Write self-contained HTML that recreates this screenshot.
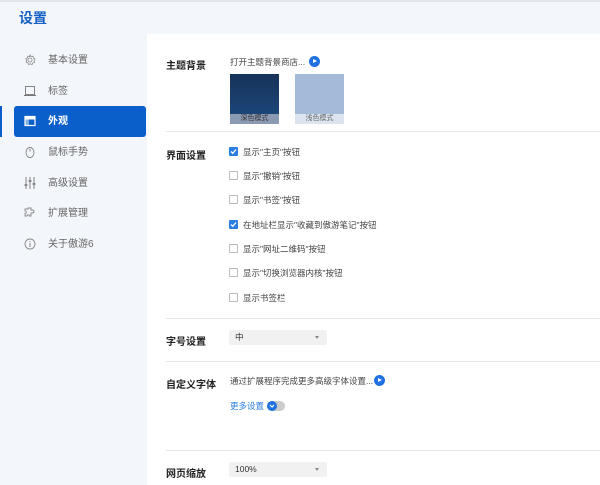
<!DOCTYPE html>
<html><head><meta charset="utf-8"><style>
*{margin:0;padding:0;box-sizing:border-box}
body{width:600px;height:485px;overflow:hidden;background:#f3f6fa;font-family:"Liberation Sans","Noto Sans CJK SC",sans-serif;position:relative;color:#333}
.topline{position:absolute;left:0;top:0;width:600px;height:2px;background:#e2e6ea}
.title{position:absolute;left:19px;top:8px;font-size:14px;font-weight:bold;color:#1560c4}
.nav{position:absolute;left:24px;font-size:10px;color:#666;height:31px;line-height:31px}
.nav svg{position:absolute;left:0;top:9px}
.nav span{position:absolute;left:24px;white-space:nowrap}
.sel{position:absolute;left:14px;top:106px;width:132px;height:31px;background:#0b5fcb;border-radius:3px}
.selbar{position:absolute;left:0;top:106px;width:2px;height:31px;background:#0b5fcb}
.main{position:absolute;left:147px;top:34px;width:453px;height:451px;background:#fff}
.lbl{position:absolute;left:166px;font-size:10px;font-weight:bold;color:#222}
.txt{position:absolute;font-size:8.5px;color:#444;white-space:nowrap}
.hr{position:absolute;left:166px;width:434px;height:1px;background:#e8e8e8}
.cb{position:absolute;left:229px;width:9px;height:9px;border:1px solid #bbb;border-radius:1px;background:#fff}
.cb.on{background:#2a7de1;border-color:#2a7de1}
.cbt{position:absolute;left:243px;font-size:8.5px;color:#444;white-space:nowrap}
.select{position:absolute;left:229px;width:98px;height:15px;background:#f1f1f1;border-radius:2px;font-size:8.5px;color:#333;padding-left:6px;line-height:15px}
.select:after{content:"";position:absolute;right:8px;top:6px;border:2px solid transparent;border-top:3px solid #888}
.play{position:absolute;width:11px;height:11px;border-radius:50%;background:#1f72e0}
.play:after{content:"";position:absolute;left:4px;top:3px;border-left:4px solid #fff;border-top:2.5px solid transparent;border-bottom:2.5px solid transparent}
</style></head><body>
<div class="topline"></div>
<div class="title">设置</div>
<div class="selbar"></div>
<div class="sel"></div>
<div class="nav" style="top:45px"><svg width="12" height="12" viewBox="0 0 12 12"><circle cx="6" cy="6" r="2" fill="none" stroke="#888" stroke-width=".8"/><path d="M6 1l1 1.5 2-.3.5 1.8 1.5 1-1 1.6.6 1.8-1.8.5-.7 1.7-1.7-.8-1.7.8-.7-1.7-1.8-.5.6-1.8-1-1.6 1.5-1 .5-1.8 2 .3z" fill="none" stroke="#888" stroke-width=".8"/></svg><span>基本设置</span></div>
<div class="nav" style="top:76px"><svg width="12" height="12"><rect x="1.5" y="1.5" width="9" height="8" fill="none" stroke="#777" stroke-width=".9"/><path d="M0 10.5h12" stroke="#777"/></svg><span>标签</span></div>
<div class="nav" style="top:106px;color:#fff;font-weight:bold"><svg width="12" height="12"><rect x="1" y="1.5" width="10" height="9" fill="none" stroke="#fff" stroke-width="1.2"/><rect x="1" y="1.5" width="10" height="3" fill="#fff"/><rect x="1" y="1.5" width="4" height="9" fill="#fff" opacity=".5"/></svg><span>外观</span></div>
<div class="nav" style="top:137px"><svg width="12" height="12"><ellipse cx="6" cy="6.5" rx="4" ry="5" fill="none" stroke="#888" stroke-width=".9"/><path d="M6 3v2.5" stroke="#888"/></svg><span>鼠标手势</span></div>
<div class="nav" style="top:168px"><svg width="12" height="12"><path d="M2 0v12M6 0v12M10 0v12" stroke="#777" stroke-width=".9"/><path d="M0.5 8h3M4.5 4h3M8.5 7h3" stroke="#777" stroke-width="1.4"/></svg><span>高级设置</span></div>
<div class="nav" style="top:198px"><svg width="12" height="12"><path d="M4 1h3v2h1.5a1.5 1.5 0 010 3H7v3H5.5a1.2 1.2 0 00-2.4 0H1V6.5a1.3 1.3 0 000-2.6V2h3z" fill="none" stroke="#888" stroke-width=".9"/></svg><span>扩展管理</span></div>
<div class="nav" style="top:229px"><svg width="12" height="12"><circle cx="6" cy="6" r="5" fill="none" stroke="#888" stroke-width=".9"/><path d="M6 5v4M6 3v1" stroke="#888"/></svg><span>关于傲游6</span></div>

<div class="main"></div>
<div class="lbl" style="top:57px">主题背景</div>
<div class="txt" style="left:230px;top:56px">打开主题背景商店...</div>
<div class="play" style="left:309px;top:56px"></div>
<div style="position:absolute;left:230px;top:74px;width:49px;height:50px;background:linear-gradient(#163259,#1d4a80)"></div>
<div style="position:absolute;left:230px;top:114px;width:49px;height:10px;background:#8a9ab3;font-size:7px;color:#333;text-align:center;line-height:10px">深色模式</div>
<div style="position:absolute;left:295px;top:74px;width:49px;height:50px;background:#a3bbd8"></div>
<div style="position:absolute;left:295px;top:114px;width:49px;height:10px;background:#dbe4ef;font-size:7px;color:#666;text-align:center;line-height:10px">浅色模式</div>
<div class="hr" style="top:131px"></div>

<div class="lbl" style="top:147px">界面设置</div>
<div class="cb on" style="top:147px"><svg width="7" height="7" style="position:absolute;left:0;top:0"><path d="M1 3.5l1.8 1.8L6 1.5" stroke="#fff" fill="none" stroke-width="1.3"/></svg></div><div class="cbt" style="top:146px">显示"主页"按钮</div>
<div class="cb" style="top:171px"></div><div class="cbt" style="top:170px">显示"撤销"按钮</div>
<div class="cb" style="top:195px"></div><div class="cbt" style="top:194px">显示"书签"按钮</div>
<div class="cb on" style="top:220px"><svg width="7" height="7" style="position:absolute;left:0;top:0"><path d="M1 3.5l1.8 1.8L6 1.5" stroke="#fff" fill="none" stroke-width="1.3"/></svg></div><div class="cbt" style="top:219px">在地址栏显示"收藏到傲游笔记"按钮</div>
<div class="cb" style="top:244px"></div><div class="cbt" style="top:243px">显示"网址二维码"按钮</div>
<div class="cb" style="top:268px"></div><div class="cbt" style="top:267px">显示"切换浏览器内核"按钮</div>
<div class="cb" style="top:293px"></div><div class="cbt" style="top:292px">显示书签栏</div>
<div class="hr" style="top:318px"></div>

<div class="lbl" style="top:333px">字号设置</div>
<div class="select" style="top:330px">中</div>
<div class="hr" style="top:361px"></div>

<div class="lbl" style="top:376px">自定义字体</div>
<div class="txt" style="left:230px;top:375px">通过扩展程序完成更多高级字体设置...</div>
<div class="play" style="left:374px;top:375px"></div>
<div class="txt" style="left:230px;top:400px;color:#2a7de1">更多设置</div>
<div style="position:absolute;left:267px;top:401px;width:18px;height:10px;border-radius:5px;background:#ccc"></div>
<div style="position:absolute;left:267px;top:401px;width:10px;height:10px;border-radius:5px;background:#1f72e0"><svg width="10" height="10" style="position:absolute"><path d="M3 4l2 2 2-2" stroke="#fff" fill="none" stroke-width="1.2"/></svg></div>
<div class="hr" style="top:450px"></div>

<div class="lbl" style="top:465px">网页缩放</div>
<div class="select" style="top:462px">100%</div>
</body></html>
